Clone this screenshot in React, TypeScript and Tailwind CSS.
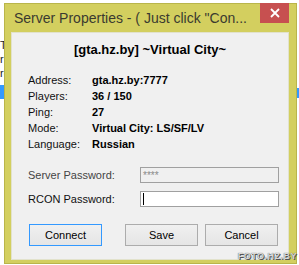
import React from "react";

const rows: [string, string][] = [
  ["Address:", "gta.hz.by:7777"],
  ["Players:", "36 / 150"],
  ["Ping:", "27"],
  ["Mode:", "Virtual City: LS/SF/LV"],
  ["Language:", "Russian"],
];

const App: React.FC = () => {
  return (
    <div className="relative w-[299px] h-[265px] overflow-hidden bg-white font-['Liberation_Sans',Arial,sans-serif]">
      {/* background bits peeking around the window */}
      <div className="absolute left-0 top-[38px] text-[11px] leading-[14px] text-[#222]">
        <div>T</div>
        <div>r</div>
        <div>re</div>
        <div>a</div>
      </div>
      <div className="absolute left-0 top-[85px] w-[4px] h-[14px] bg-[#3399ff]" />
      <div className="absolute right-0 top-[88px] w-[2px] h-[10px] bg-[#3399ff]" />

      {/* ─── DIALOG WINDOW ─── */}
      <div className="absolute left-[4px] top-[3px] w-[293px] h-[261px] bg-[#d3cf5f] border border-[#b9b54a] flex flex-col">
        <div className="relative h-[28px] flex items-center pl-[9px]">
          <span className="text-[14px] text-[#3a3a30] whitespace-nowrap">
            Server Properties - ( Just click "Con...
          </span>
          <div className="absolute right-[7px] top-[-1px] w-[29px] h-[20px] bg-[#c75050] flex items-center justify-center">
            <svg width="10" height="10" viewBox="0 0 10 10">
              <path d="M1 1 L9 9 M9 1 L1 9" stroke="white" strokeWidth="1.8" />
            </svg>
          </div>
        </div>

        <div className="ml-[6px] mr-[7px] h-[228px] bg-[#f0f0f0] border border-[#e2e2cc] text-[11px] text-black">
          <div className="pt-[9px] text-center text-[13px] leading-[16px] font-bold">
            [gta.hz.by] ~Virtual City~
          </div>

          <div className="mt-[14px] pl-[16px]">
            {rows.map(([label, value]) => (
              <div key={label} className="flex h-[16px] items-center">
                <span className="w-[64px] text-[#111]">{label}</span>
                <span className="font-bold">{value}</span>
              </div>
            ))}
          </div>

          <div className="mt-[15px] pl-[16px] pr-[9px] flex flex-col gap-[8px]">
            <div className="flex items-center h-[16px]">
              <span className="w-[112px] text-[#444]">Server Password:</span>
              <div className="flex-1 h-[16px] bg-[#f0f0f0] border border-[#a0a0a0] flex items-center pl-[2px] text-[10px] text-[#8a8a8a]">
                ****
              </div>
            </div>
            <div className="flex items-center h-[16px]">
              <span className="w-[112px] text-[#111]">RCON Password:</span>
              <div className="flex-1 h-[16px] bg-white border border-[#a0a0a0] flex items-center pl-[2px]">
                <div className="w-[1px] h-[12px] bg-black" />
              </div>
            </div>
          </div>

          <div className="mt-[17px] pl-[17px] flex">
            <button className="w-[73px] h-[22px] border border-[#3399ff] bg-gradient-to-b from-[#f0f0f0] to-[#e5e5e5] text-[11px]">
              Connect
            </button>
            <button className="ml-[23px] w-[73px] h-[22px] border border-[#acacac] bg-gradient-to-b from-[#f0f0f0] to-[#e5e5e5] text-[11px]">
              Save
            </button>
            <button className="ml-[7px] w-[73px] h-[22px] border border-[#acacac] bg-gradient-to-b from-[#f0f0f0] to-[#e5e5e5] text-[11px]">
              Cancel
            </button>
          </div>
        </div>
      </div>

      {/* watermark */}
      <div className="absolute right-[2px] bottom-[2px] text-[9px] font-bold tracking-[0.5px] text-[#d8d8d8] [text-shadow:0_0_1px_#444,1px_1px_0_#555]">
        FOTO.HZ.BY
      </div>
    </div>
  );
};

export default App;
